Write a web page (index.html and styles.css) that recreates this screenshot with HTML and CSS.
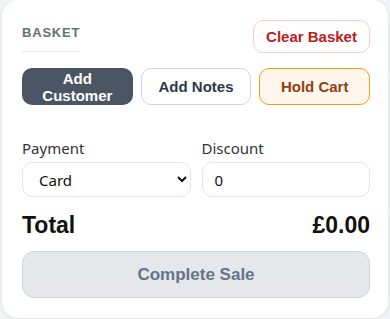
FILE: index.html
```html
<!DOCTYPE html>
<html lang="en">

<head>
  <meta charset="UTF-8">
  <meta name="viewport" content="width=device-width, initial-scale=1.0">
  <title>Basket</title>
  <link rel="stylesheet" href="styles.css">
</head>

<body>
  <div class="card">
    <div class="head">
      <h2 class="title">BASKET</h2>
      <button class="btn btn-clear">Clear Basket</button>
    </div>

    <div class="actions">
      <button class="btn btn-dark">Add Customer</button>
      <button class="btn btn-light">Add Notes</button>
      <button class="btn btn-hold">Hold Cart</button>
    </div>

    <div class="fields">
      <label class="field">
        <span class="label">Payment</span>
        <select class="control">
          <option>Card</option>
          <option>Cash</option>
        </select>
      </label>
      <label class="field">
        <span class="label">Discount</span>
        <input class="control" type="text" value="0">
      </label>
    </div>

    <div class="total">
      <span>Total</span>
      <span class="amount">£0.00</span>
    </div>

    <button class="btn btn-complete" disabled>Complete Sale</button>
  </div>
</body>

</html>
```

FILE: styles.css
```css
* {
  margin: 0;
  padding: 0;
  box-sizing: border-box;
}

body {
  background-color: #f1f3f5;
  padding: 0 2px 2px;
  font-family: "Liberation Sans", Arial, sans-serif;
}

.card {
  background-color: #fff;
  border-radius: 16px;
  box-shadow: 0 1px 4px rgba(0, 0, 0, .08);
  padding: 20px 18px 20px 20px;
}

.head {
  display: flex;
  justify-content: space-between;
  align-items: flex-start;
}

.title {
  display: inline-block;
  margin-top: 4px;
  padding-bottom: 9px;
  border-bottom: 1px solid #e2e8ec;
  font-size: 13px;
  line-height: 18px;
  letter-spacing: 0.8px;
  color: #66716f;
  font-weight: bold;
  white-space: nowrap;
}

.btn {
  font-family: "Liberation Sans", Arial, sans-serif;
  font-weight: bold;
  font-size: 15px;
  line-height: 17px;
  border-radius: 10px;
  border: 1px solid transparent;
  background: #fff;
  cursor: pointer;
}

.btn-clear {
  width: 117px;
  height: 33px;
  border-color: #fecaca;
  color: #b91c1c;
}

.actions {
  display: grid;
  grid-template-columns: repeat(3, 1fr);
  gap: 8px;
  margin-top: 15px;
}

.actions .btn {
  height: 37px;
  padding: 0 12px;
}

.btn-dark {
  background-color: #4b5563;
  color: #fff;
}

.btn-light {
  border-color: #d1d5db;
  color: #2d3748;
}

.btn-hold {
  background-color: #fff7ed;
  border-color: #f59e0b;
  color: #92400e;
}

.fields {
  display: grid;
  grid-template-columns: 1fr 1fr;
  gap: 11px;
  margin-top: 33px;
}

.field {
  display: flex;
  flex-direction: column;
  gap: 4px;
}

.label {
  font-family: "Noto Sans", sans-serif;
  font-size: 15px;
  line-height: 20px;
  color: #333;
}

.control {
  height: 35px;
  border: 1px solid #e2e6e8;
  border-radius: 10px;
  padding: 0 8px 0 12px;
  font-family: "Noto Sans", sans-serif;
  font-size: 15px;
  color: #111;
  background: #fff;
  outline: none;
  width: 100%;
}

.total {
  display: flex;
  justify-content: space-between;
  margin-top: 14px;
  font-size: 23px;
  font-weight: bold;
  line-height: 28px;
  color: #111;
}

.btn-complete {
  display: block;
  width: 100%;
  height: 47px;
  margin-top: 12px;
  background-color: #e5e7eb;
  border-color: #cbd5e1;
  border-radius: 12px;
  color: #64748b;
  font-size: 17px;
  cursor: not-allowed;
}
```
